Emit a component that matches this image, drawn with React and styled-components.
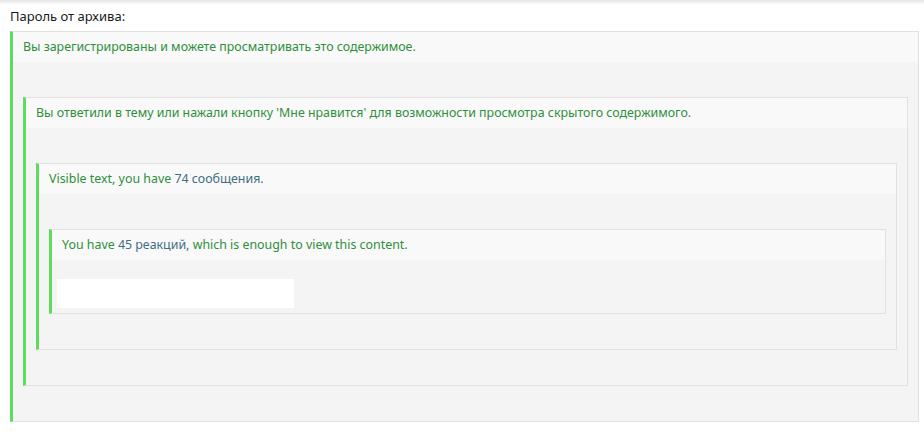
import React from 'react';
import styled, { createGlobalStyle } from 'styled-components';

const GlobalStyle = createGlobalStyle`
  body {
    margin: 0;
    background: #fff;
    font-family: "Noto Sans", "Open Sans", sans-serif;
  }
`;

const Page = styled.div`
  width: 924px;
  height: 434px;
  box-sizing: border-box;
  padding: 0 5px 0 10px;
  background: linear-gradient(#e4e4e4 0, #ffffff 5px);
`;

const Title = styled.div`
  font-size: 13px;
  line-height: 20px;
  color: #1a1a1a;
  padding-top: 6px;
  margin-bottom: 5px;
`;

const Box = styled.div`
  background: #f4f4f4;
  border: 1px solid #e1e1e1;
  border-left: 3px solid #5cdb5c;
`;

const Header = styled.div`
  background: #f9f9f9;
  height: 30px;
  line-height: 30px;
  padding: 0 10px;
  font-size: 12.4px;
  color: #2f8f3b;
  white-space: nowrap;
`;

const Count = styled.span`
  color: #3f6f83;
`;

const Body = styled.div`
  padding: ${(p) => (p.$last ? '19px 0 5px 5px' : '35px 10px 35px 10px')};
`;

const Secret = styled.div`
  width: 237px;
  height: 29px;
  background: #fff;
`;

const App = () => (
  <>
    <GlobalStyle />
    <Page>
      <Title>Пароль от архива:</Title>
      <Box>
        <Header>Вы зарегистрированы и можете просматривать это содержимое.</Header>
        <Body>
          <Box>
            <Header>
              Вы ответили в тему или нажали кнопку 'Мне нравится' для возможности просмотра скрытого содержимого.
            </Header>
            <Body>
              <Box>
                <Header>
                  Visible text, you have <Count>74 сообщения.</Count>
                </Header>
                <Body>
                  <Box>
                    <Header>
                      You have <Count>45 реакций,</Count> which is enough to view this content.
                    </Header>
                    <Body $last>
                      <Secret />
                    </Body>
                  </Box>
                </Body>
              </Box>
            </Body>
          </Box>
        </Body>
      </Box>
    </Page>
  </>
);

export default App;
